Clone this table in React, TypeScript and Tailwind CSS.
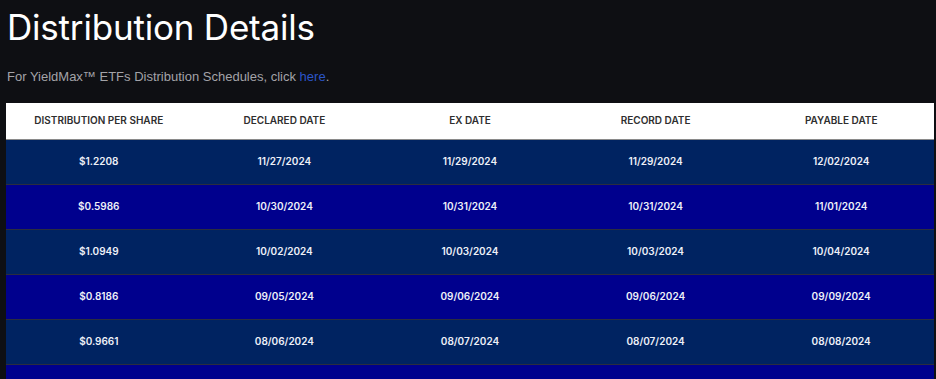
import React from 'react'

const rows = [
  ['$1.2208', '11/27/2024', '11/29/2024', '11/29/2024', '12/02/2024'],
  ['$0.5986', '10/30/2024', '10/31/2024', '10/31/2024', '11/01/2024'],
  ['$1.0949', '10/02/2024', '10/03/2024', '10/03/2024', '10/04/2024'],
  ['$0.8186', '09/05/2024', '09/06/2024', '09/06/2024', '09/09/2024'],
  ['$0.9661', '08/06/2024', '08/07/2024', '08/07/2024', '08/08/2024'],
]

const headers = ['Distribution Per Share', 'Declared Date', 'Ex Date', 'Record Date', 'Payable Date']

export default function App() {
  return (
    <div className="w-[936px] h-[379px] overflow-hidden bg-[#0e0f13] font-['Inter',sans-serif]">
      <div className="pl-[6px] pr-[2px]">
        <h1 className="pt-[6px] pl-[1px] text-[35px] leading-[43px] font-normal text-white tracking-[-0.2px]">
          Distribution Details
        </h1>
        <p className="mt-[20px] pl-[1px] text-[13px] leading-[16px] text-[#a3a3a8] font-['Liberation_Sans',Arial,sans-serif]">
          For YieldMax™ ETFs Distribution Schedules, click{' '}
          <a className="text-[#2b55c9]">here</a>.
        </p>
        <table className="mt-[18px] w-full table-fixed border-collapse">
          <thead>
            <tr className="h-[36px] bg-white border-b border-[#8a8a8a]">
              {headers.map((h) => (
                <th key={h} className="text-[10px] font-semibold uppercase text-[#2e2e2e] text-center">
                  {h}
                </th>
              ))}
            </tr>
          </thead>
          <tbody>
            {rows.map((r, i) => (
              <tr
                key={i}
                className={
                  'h-[45px] border-b border-[#2a2d3e] ' + (i % 2 === 0 ? 'bg-[#002361]' : 'bg-[#00008d]')
                }
              >
                {r.map((c, j) => (
                  <td key={j} className="text-[10px] font-semibold text-[#eef0f8] text-center">
                    {c}
                  </td>
                ))}
              </tr>
            ))}
            <tr className="h-[45px] bg-[#00008d]">
              <td colSpan={5}></td>
            </tr>
          </tbody>
        </table>
      </div>
    </div>
  )
}
